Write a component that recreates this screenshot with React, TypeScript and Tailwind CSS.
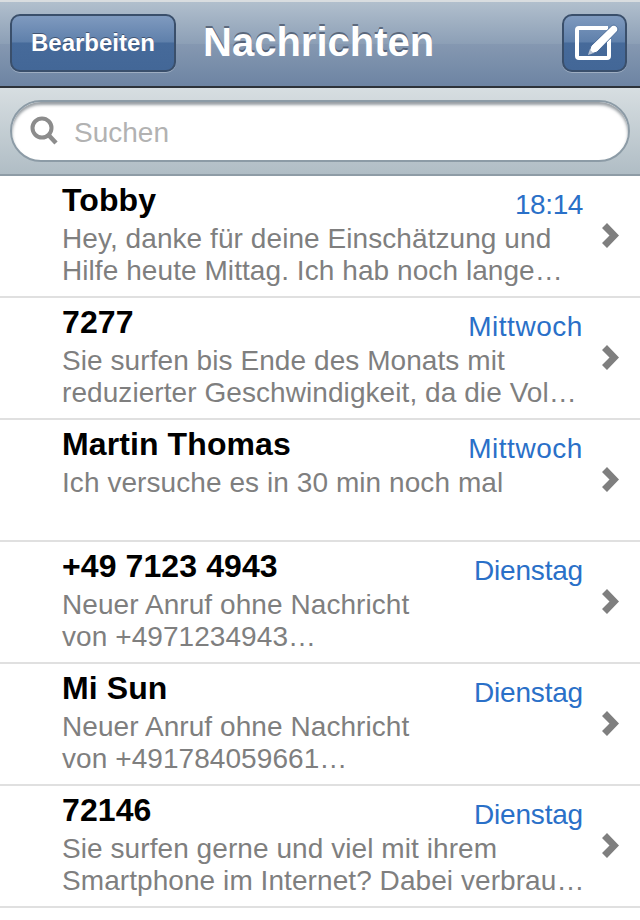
const font = { fontFamily: '"Liberation Sans", Arial, sans-serif' };

const messages = [
  { name: 'Tobby', time: '18:14', timeClass: 'tracking-[-0.4px]', lines: ['Hey, danke für deine Einschätzung und', 'Hilfe heute Mittag. Ich hab noch lange…'] },
  { name: '7277', time: 'Mittwoch', timeClass: 'tracking-[0.55px]', lines: ['Sie surfen bis Ende des Monats mit', 'reduzierter Geschwindigkeit, da die Vol…'] },
  { name: 'Martin Thomas', time: 'Mittwoch', timeClass: 'tracking-[0.55px]', lines: ['Ich versuche es in 30 min noch mal', ''] },
  { name: '+49 7123 4943', time: 'Dienstag', timeClass: 'tracking-[-0.2px]', lines: ['Neuer Anruf ohne Nachricht', 'von +4971234943…'] },
  { name: 'Mi Sun', time: 'Dienstag', timeClass: 'tracking-[-0.2px]', lines: ['Neuer Anruf ohne Nachricht', 'von +491784059661…'] },
  { name: '72146', time: 'Dienstag', timeClass: 'tracking-[-0.2px]', lines: ['Sie surfen gerne und viel mit ihrem', 'Smartphone im Internet? Dabei verbrau…'] },
];

const Chevron = () => (
  <svg width="17" height="25" viewBox="0 0 17 25" className="shrink-0 mb-[2px]">
    <polygon points="0,5 5,0 17,12.5 5,25 0,20 7.5,12.5" fill="#7f7f7f" />
  </svg>
);

const ComposeIcon = () => (
  <svg width="56" height="48" viewBox="0 0 56 48">
    <path d="M41 9 H12 a2 2 0 0 0 -2 2 V37 a2 2 0 0 0 2 2 H40 a2 2 0 0 0 2 -2 V20" fill="none" stroke="#fff" strokeWidth="4" />
    <path d="M21 36 L24 27 L44 7.500 C46 5.500 48 6 49.500 7.500 C51 9 51.500 11 49.500 13 L30 33 Z" fill="#fff" stroke="#4a6b99" strokeWidth="1" />
    <path d="M21 36 L22.800 30.500 L26.500 34 Z" fill="#b9c4d4" />
  </svg>
);

const NavButton = ({ className, children }: { className: string; children: React.ReactNode }) => (
  <div
    className={`h-[58px] flex items-center justify-center rounded-[10px] border-2 border-[#3a4f6b] bg-[linear-gradient(#7f9abf_0%,#5f80ab_48%,#466a9a_50%,#436797_100%)] shadow-[0_1px_0_rgba(255,255,255,0.3)] ${className}`}
  >
    {children}
  </div>
);

const MessageRow = ({ name, time, timeClass, lines }: { name: string; time: string; timeClass: string; lines: string[] }) => (
  <div className="h-[122px] border-b-2 border-[#e0e0e0] bg-white pl-[62px] pr-[21px] flex items-center">
    <div className="flex-1 min-w-0 h-full pt-px">
      <div className="flex items-start justify-between h-[46px]">
        <span className="text-[32px] leading-[46px] font-bold text-black tracking-[0.1px]">{name}</span>
        <span className={`text-[28px] leading-[32px] mt-[12px] text-[#2a70c8] mr-[19px] ${timeClass}`}>{time}</span>
      </div>
      <div className="text-[28px] leading-[32px] text-[#7f7f7f] whitespace-nowrap tracking-[0.07px]">
        <div className="h-[32px]">{lines[0]}</div>
        <div className="h-[32px]">{lines[1]}</div>
      </div>
    </div>
    <Chevron />
  </div>
);

export default function App() {
  return (
    <div className="w-[640px] h-[920px] bg-white overflow-hidden" style={font}>
      <div className="h-[88px] border-t-2 border-t-[#d9dde0] border-b-2 border-b-[#2d3239] bg-[linear-gradient(#b1bfcd_0%,#8c9fb6_50%,#8598b1_50%,#6d84a3_100%)] pl-[10px] pr-[13px] pb-[2px] flex items-center justify-between">
        <div className="flex items-center">
          <NavButton className="w-[166px]">
            <span className="text-[24px] font-bold text-white [text-shadow:0_-1px_0_rgba(40,50,70,0.6)]">Bearbeiten</span>
          </NavButton>
          <span className="ml-[27px] mb-[3px] text-[40px] leading-none font-bold text-[#fff] [text-shadow:0_-2px_0_rgba(50,60,80,0.6)]">Nachrichten</span>
        </div>
        <NavButton className="w-[65px]">
          <ComposeIcon />
        </NavButton>
      </div>

      <div className="h-[88px] border-b-2 border-[#8e9ca6] bg-[linear-gradient(#d7dee1,#b0bdc5)] px-[10px] flex items-center">
        <div className="w-full h-[62px] rounded-[31px] bg-white border-2 border-[#8c9ba6] shadow-[inset_0_3px_3px_rgba(70,80,90,0.55)] flex items-center pl-[17px]">
          <svg width="30" height="30" viewBox="0 0 30 30" className="shrink-0">
            <circle cx="13" cy="12" r="9.500" fill="none" stroke="#8c8c8c" strokeWidth="4" />
            <path d="M19.500 19 L27 27" stroke="#8c8c8c" strokeWidth="4.500" />
          </svg>
          <span className="ml-[15px] mt-[3px] text-[28px] text-[#b2b2b2]">Suchen</span>
        </div>
      </div>

      <div>
        {messages.map((m) => (
          <MessageRow key={m.name} name={m.name} time={m.time} timeClass={m.timeClass} lines={m.lines} />
        ))}
      </div>
    </div>
  );
}
